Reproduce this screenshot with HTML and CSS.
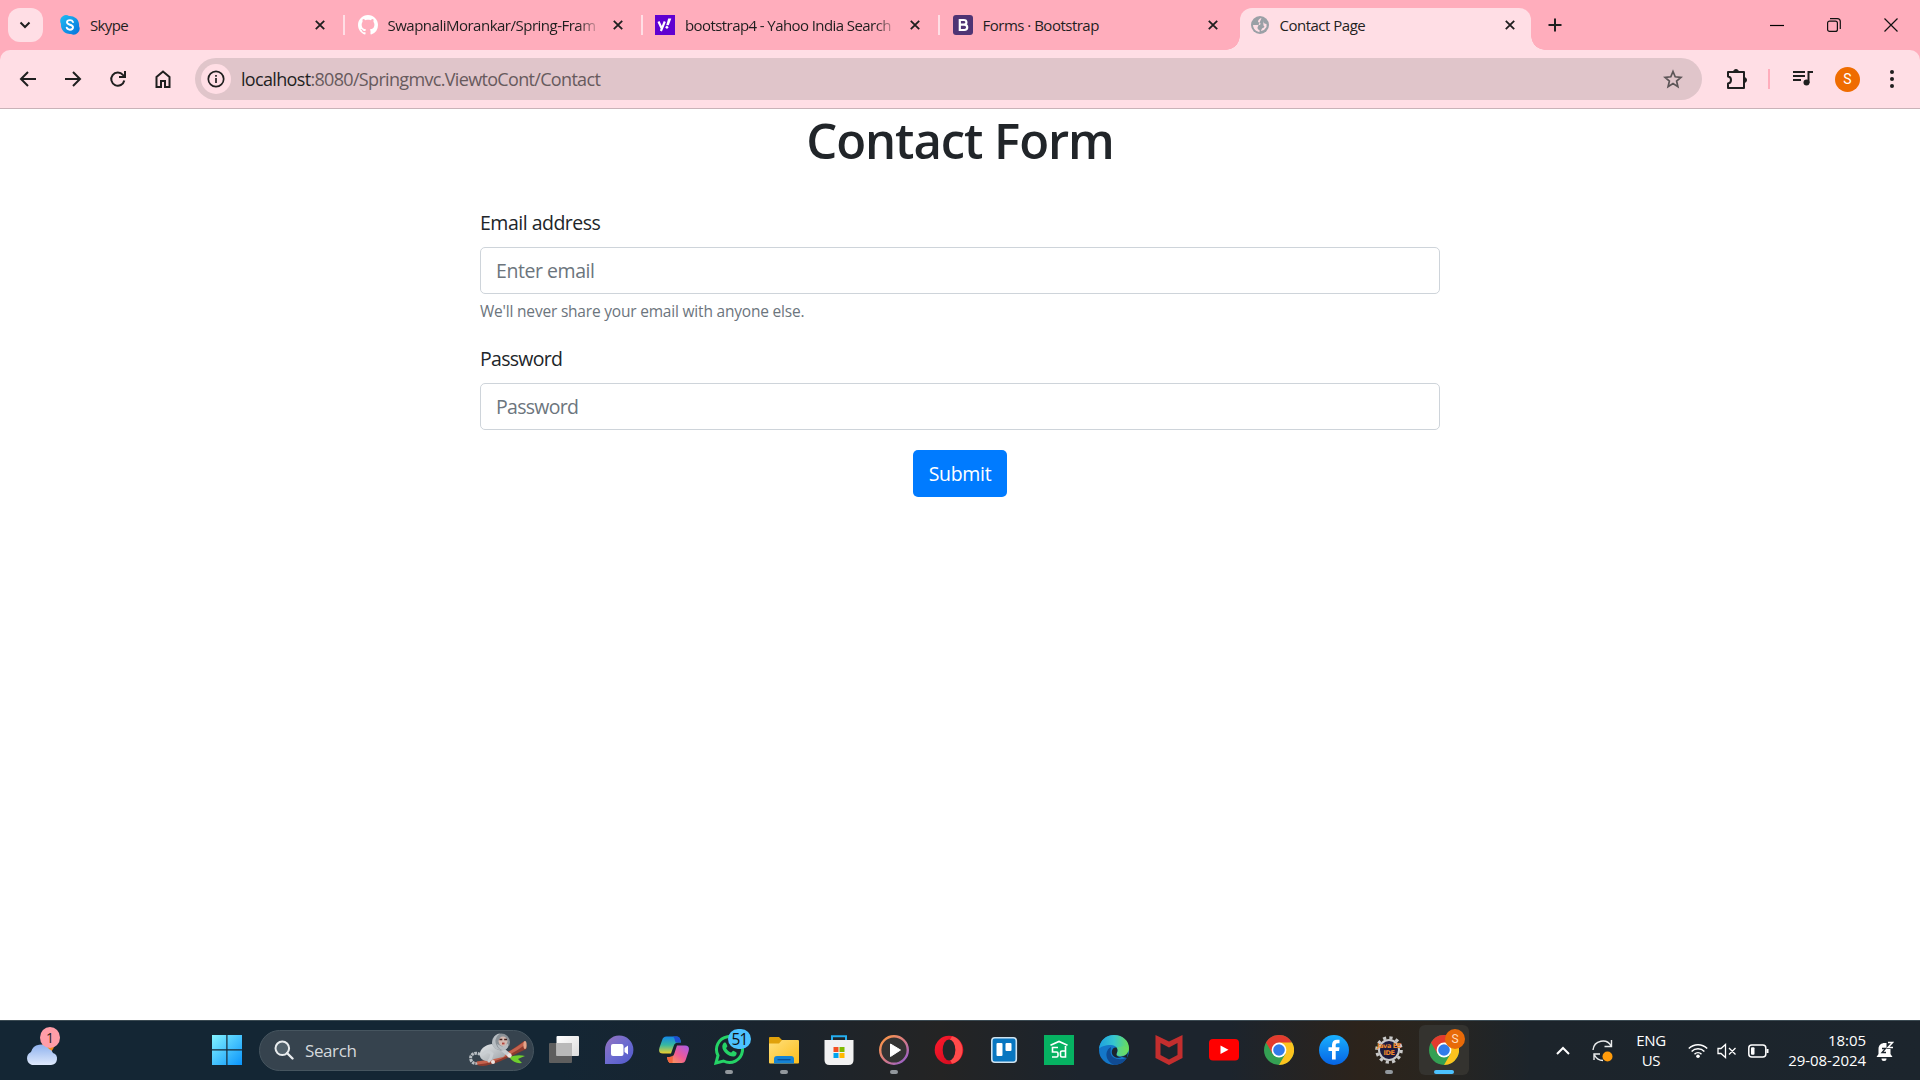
FILE: index.html
```html
<!DOCTYPE html>
<html lang="en">
<head>
<meta charset="utf-8">
<title>Contact Page</title>
<link rel="stylesheet" href="styles.css">
</head>
<body>
<svg class="defs" width="0" height="0">
  <defs>
    <linearGradient id="win" x1="0" y1="0" x2="1" y2="1"><stop offset="0" stop-color="#83f3ff"/><stop offset="1" stop-color="#0a94fb"/></linearGradient>
    <linearGradient id="skype" x1="0" y1="0" x2="1" y2="1"><stop offset="0" stop-color="#1fbdf3"/><stop offset="1" stop-color="#0672dc"/></linearGradient>
    <linearGradient id="cloud" x1="0" y1="0" x2="0" y2="1"><stop offset="0" stop-color="#8fb2ee"/><stop offset="1" stop-color="#dfe9fc"/></linearGradient>
    <linearGradient id="view" x1="0" y1="0" x2="1" y2="1"><stop offset="0" stop-color="#fff"/><stop offset="1" stop-color="#dcdcdc"/></linearGradient>
    <linearGradient id="teams" x1="0" y1="0" x2="1" y2="1"><stop offset="0" stop-color="#9673bd"/><stop offset=".5" stop-color="#6d6bd0"/><stop offset="1" stop-color="#4f58ca"/></linearGradient>
    <linearGradient id="cop1" x1="0" y1="0" x2="0" y2="1"><stop offset="0" stop-color="#1488e8"/><stop offset=".5" stop-color="#37b8a0"/><stop offset="1" stop-color="#f0d02c"/></linearGradient>
    <linearGradient id="cop2" x1="1" y1="0" x2="0" y2="1"><stop offset="0" stop-color="#a65bea"/><stop offset=".5" stop-color="#ee5a97"/><stop offset="1" stop-color="#fdaa48"/></linearGradient>
    <linearGradient id="folder" x1="0" y1="0" x2="1" y2="1"><stop offset="0" stop-color="#ffe07c"/><stop offset="1" stop-color="#fcbd1c"/></linearGradient>
    <linearGradient id="ring" x1="0" y1="0" x2="1" y2="1"><stop offset="0" stop-color="#ff9a3d"/><stop offset=".5" stop-color="#d97b83"/><stop offset="1" stop-color="#8b5bd6"/></linearGradient>
    <linearGradient id="opera" x1="0" y1="0" x2="1" y2="1"><stop offset="0" stop-color="#ff1b2d"/><stop offset="1" stop-color="#c8081c"/></linearGradient>
    <linearGradient id="edge1" x1="0" y1="0" x2="1" y2="0"><stop offset="0" stop-color="#1da1e0"/><stop offset=".5" stop-color="#36c5cf"/><stop offset="1" stop-color="#6bdf55"/></linearGradient>
    <linearGradient id="fb" x1="0" y1="0" x2="0" y2="1"><stop offset="0" stop-color="#19affe"/><stop offset="1" stop-color="#0663e4"/></linearGradient>
    <linearGradient id="fur" x1="0" y1="0" x2="1" y2="1"><stop offset="0" stop-color="#e4e7e9"/><stop offset="1" stop-color="#9aa0a5"/></linearGradient>
    <symbol id="chrome" viewBox="0 0 30 30">
      <circle cx="15" cy="15" r="15" fill="#34a053"/>
      <path d="M2 7.5A15 15 0 0 1 28 7.5L15 9 8.5 18.7z" fill="#e33b2e"/>
      <path d="M28 7.5A15 15 0 0 1 15 30l6.5-11.2L15 7.5z" fill="#fcc31e"/>
      <circle cx="15" cy="15" r="7.4" fill="#fff"/><circle cx="15" cy="15" r="5.8" fill="#327bea"/>
    </symbol>
    <symbol id="x" viewBox="0 0 10 10"><path d="M.8.8l8.4 8.4M9.200.8L.8 9.200" stroke="#1f1f1f" stroke-width="1.8" fill="none"/></symbol>
  </defs>
</svg>

<div class="tabstrip">
  <div class="tab-search"><svg width="12" height="8" viewBox="0 0 12 8"><path d="M1.500 1.500L6 6l4.500-4.500" fill="none" stroke="#1f1f1f" stroke-width="2"/></svg></div>
  <div class="tab first">
    <svg class="fav" viewBox="0 0 20 20"><path d="M6 0a6 6 0 0 1 3 1A9 9 0 0 1 19 11a6 6 0 0 1-8 8A9 9 0 0 1 1 9 6 6 0 0 1 6 0z" fill="url(#skype)"/><path d="M13 7c-.6-1.500-1.700-1.900-3-1.900-1.700 0-3 .8-3 2.200 0 3.200 6 1.700 6 5 0 1.500-1.400 2.400-3.100 2.400-1.600 0-2.800-.7-3.200-2.100" fill="none" stroke="#fff" stroke-width="1.900" stroke-linecap="round"/></svg>
    <span class="title t1">Skype</span><svg class="close"><use href="#x"/></svg>
  </div>
  <div class="tab">
    <svg class="fav" viewBox="0 0 16 16"><path fill="#fff" d="M8 0C3.580 0 0 3.580 0 8c0 3.540 2.290 6.530 5.470 7.590.4.070.55-.17.55-.38 0-.19-.01-.82-.01-1.490-2.010.37-2.530-.49-2.690-.94-.09-.23-.48-.94-.82-1.130-.28-.15-.68-.52-.01-.53.63-.01 1.080.58 1.230.82.72 1.210 1.870.87 2.330.66.07-.52.28-.87.51-1.070-1.780-.2-3.640-.89-3.640-3.950 0-.87.31-1.590.82-2.150-.08-.2-.36-1.020.08-2.120 0 0 .67-.21 2.200.82.64-.18 1.320-.27 2-.27s1.360.09 2 .27c1.530-1.040 2.200-.82 2.200-.82.44 1.100.16 1.920.08 2.120.51.56.82 1.270.82 2.150 0 3.070-1.870 3.750-3.650 3.950.29.25.54.73.54 1.480 0 1.070-.01 1.930-.01 2.200 0 .21.15.46.55.38A8.010 8.010 0 0 0 16 8c0-4.420-3.580-8-8-8z"/></svg>
    <span class="title fade t2">SwapnaliMorankar/Spring-Fram</span><svg class="close"><use href="#x"/></svg>
  </div>
  <div class="tab">
    <svg class="fav" viewBox="0 0 20 20"><rect width="20" height="20" fill="#5f01d1"/><path d="M3.500 6.500l3 6.500M9.800 6.500L5.900 16" stroke="#fff" stroke-width="2.200" fill="none"/><path d="M13.200 3.500h3.100l-2.500 6.800h-2.600z" fill="#fff"/><circle cx="11.900" cy="12.300" r="1.400" fill="#fff"/></svg>
    <span class="title fade t3">bootstrap4 - Yahoo India Search</span><svg class="close"><use href="#x"/></svg>
  </div>
  <div class="tab">
    <svg class="fav" viewBox="0 0 20 20"><rect width="20" height="20" rx="3" fill="#4f3474"/><path d="M6.800 5h4c3.500 0 3.500 4.600 0 4.600H6.800h4.500c3.900 0 3.900 5.400 0 5.400H6.800z" fill="none" stroke="#fff" stroke-width="2.200"/></svg>
    <span class="title t4">Forms · Bootstrap</span><svg class="close"><use href="#x"/></svg>
  </div>
  <div class="tab active">
    <svg class="fav globe" viewBox="0 0 18 18"><circle cx="9" cy="9" r="9" fill="#9aa0a6"/><path d="M10.500 2C8.500 2.500 7 4 7 5.500c0 1.300 2.300.6 2.500 2C9.700 8.900 8 9.300 6.500 9H2c0 2.500 1.500 5 3.500 6l3 1.200V14c-1.300-.3-2-1-2-2.500M12.500 9.500c1.500.8 1 2-.5 2.500-1 .3-1.500 1.200-2 3l3-1 2.500-3V8c-2-.2-3-1-3.200-2.500L12 3z" fill="#ffdee5"/></svg>
    <span class="title t5">Contact Page</span><svg class="close"><use href="#x"/></svg>
  </div>
  <svg class="new-tab" width="14" height="14" viewBox="0 0 14 14"><path d="M7 .5v13M.5 7h13" stroke="#1f1f1f" stroke-width="2"/></svg>
  <div class="window-buttons">
    <svg width="14" height="14" viewBox="0 0 14 14"><path d="M0 7.500h14" stroke="#000" stroke-width="1.200"/></svg>
    <svg width="14" height="14" viewBox="0 0 14 14"><rect x=".6" y="3.100" width="9.800" height="10.300" rx="2" fill="none" stroke="#111" stroke-width="1.200"/><path d="M3 .6h7.300a3 3 0 0 1 3 3V11" fill="none" stroke="#111" stroke-width="1.200"/></svg>
    <svg width="14" height="14" viewBox="0 0 14 14"><path d="M.5.5l13 13M13.500.5l-13 13" stroke="#111" stroke-width="1.200"/></svg>
  </div>
</div>

<div class="toolbar-back">
<div class="toolbar">
  <svg class="nav" viewBox="0 0 20 20"><path d="M18 10H3M10 3l-7 7 7 7" /></svg>
  <svg class="nav" viewBox="0 0 20 20"><path d="M2 10h15M10 3l7 7-7 7"/></svg>
  <svg class="nav" viewBox="0 0 20 20"><path d="M16.300 11.500a6.600 6.600 0 1 1-1.400-5.700l1.800 2M17 2v6h-6"/></svg>
  <svg class="nav" viewBox="0 0 20 20"><path d="M3.500 18V8L10 2.500 16.500 8v10H12v-6H8v6z"/></svg>
  <div class="address">
    <div class="info"><svg width="18" height="18" viewBox="0 0 18 18"><circle cx="9" cy="9" r="7.700" fill="none" stroke="#1f1f1f" stroke-width="1.700"/><path d="M9 8v5M9 5v1.800" stroke="#1f1f1f" stroke-width="1.700"/></svg></div>
    <span class="url"><b>localhost</b>:8080/Springmvc.ViewtoCont/Contact</span>
    <svg class="star" width="20" height="20" viewBox="0 0 20 20"><path d="M10 2.500l2.200 5.300 5.700.5-4.300 3.700 1.300 5.600L10 14.600l-4.900 3 1.300-5.600L2.100 8.300l5.700-.5z" fill="none" stroke="#5c5557" stroke-width="1.700"/></svg>
  </div>
  <svg class="puzzle" width="22" height="22" viewBox="0 0 22 22"><path d="M2 4h16v16H2v-4.500c4-.5 4-6.500 0-7z" fill="none" stroke="#1f1f1f" stroke-width="2" stroke-linejoin="round"/><path d="M7.500 4a2.500 2.500 0 0 1 5 0zM18 9.500a2.500 2.500 0 0 1 0 5z" fill="#1f1f1f" stroke="#1f1f1f"/></svg>
  <i class="divider"></i>
  <svg class="music" width="20" height="18" viewBox="0 0 20 18"><path d="M0 2h12M0 6h12M0 10h8" stroke="#1f1f1f" stroke-width="2"/><path d="M15.500 13V2H20" fill="none" stroke="#1f1f1f" stroke-width="2"/><circle cx="13.500" cy="12.500" r="3" fill="#1f1f1f"/></svg>
  <span class="avatar">S</span>
  <svg class="dots" width="6" height="18" viewBox="0 0 6 18"><circle cx="3" cy="2" r="2"/><circle cx="3" cy="9" r="2"/><circle cx="3" cy="16" r="2"/></svg>
</div>
</div>

<main class="page">
  <h1>Contact Form</h1>
  <form class="form">
    <label for="email">Email address</label>
    <input id="email" type="email" placeholder="Enter email">
    <small>We'll never share your email with anyone else.</small>
    <label for="pass">Password</label>
    <input id="pass" type="password" placeholder="Password">
    <button type="button">Submit</button>
  </form>
</main>

<footer class="taskbar">
  <div class="weather">
    <svg width="34" height="38" viewBox="0 0 34 38"><circle cx="24" cy="18" r="6" fill="#f58a1c"/><path d="M8 37a7 7 0 0 1-1-13 10 10 0 0 1 18-3 6 6 0 0 1 4 4 6.200 6.200 0 0 1-2 12z" fill="url(#cloud)"/></svg>
    <span class="count">1</span>
  </div>
  <svg class="start" width="30" height="30" viewBox="0 0 30 30"><path d="M0 0h14.300v14.300H0zM15.500 0H30v14.300H15.500zM0 15.500h14.300V30H0zM15.500 15.500H30V30H15.500z" fill="url(#win)"/></svg>
  <div class="search">
    <svg width="20" height="20" viewBox="0 0 20 20"><circle cx="8.300" cy="8.300" r="6.800" fill="#52616b" stroke="#e9ecee" stroke-width="2"/><path d="M13 13l5.500 5.500" stroke="#e9ecee" stroke-width="2.400" stroke-linecap="round"/></svg>
    <span>Search</span>
    <svg class="monkey" width="58" height="34" viewBox="0 0 58 34">
      <path d="M5 29c15 0 32-7 50-21l2 1 .5 7C41 23 30 31 14 33q-7 0-9-4z" fill="#8c3b2e"/><path d="M8 30c17-1 32-8 48-20" stroke="#c4624d" stroke-width="3" fill="none"/><ellipse cx="56" cy="12" rx="1.600" ry="4" fill="#e5a489"/>
      <path d="M40 24q9-3 16-1-5 2-7 3l4 4q-8 1-12-5z" fill="#6fce2e"/>
      <path d="M14 23C6 17 0 22 2 27c1 3 4 4 6 3" fill="none" stroke="#b9bfc4" stroke-width="3" stroke-dasharray="2.500 .8"/>
      <path d="M11 23c-1-7 5-11 12-12l12 4c3 3 2 8-1 9l-9 2c-5 4-13 2-14-3z" fill="url(#fur)"/>
      <path d="M14 21q5-5 9 0-1 5-3 7" fill="none" stroke="#c9ced2" stroke-width="3" stroke-linecap="round"/>
      <path d="M34 17l6 5" stroke="#c6cbcf" stroke-width="4" stroke-linecap="round"/>
      <ellipse cx="32" cy="9" rx="9" ry="8.500" fill="#8b9298"/><path d="M24 6q2-5 7-5.500Q26 4 26.500 9T32 17q-8 0-9-7z" fill="#b7bdc2"/><path d="M28 11l5 2.500 6-3q1 4-3 6.500-6 1-8-6z" fill="#b7bdc2"/>
      <ellipse cx="34" cy="8.300" rx="4.400" ry="4.800" fill="#d3b9b1"/><path d="M30.500 6.500h2.800M35.200 6.500H38" stroke="#43211f" stroke-width="1.500"/><path d="M33 10.500h2.500" stroke="#b3453f" stroke-width="1.800"/>
      <circle cx="40.500" cy="22.500" r="2.200" fill="#eee3df"/><circle cx="24" cy="29" r="2" fill="#eee3df"/>
    </svg>
  </div>
  <div class="apps">
    <div class="app"><svg viewBox="0 0 30 30"><rect y="8" width="23" height="20" rx="1" fill="#5e5e5e"/><rect x="7.500" y="1" width="22.500" height="20" rx="1" fill="url(#view)"/><path d="M7.500 8H23v13H7.500z" fill="#b9b9b9"/></svg></div>
    <div class="app"><svg viewBox="0 0 30 30"><path d="M1 29V15a14.200 14.200 0 1 1 14 14z" fill="url(#teams)"/><rect x="7" y="9" width="12.500" height="12" rx="2" fill="#fff"/><path d="M20.500 13l3.500-2.500v9L20.500 17z" fill="#fff"/></svg></div>
    <div class="app"><svg viewBox="0 0 30 30"><path d="M7.500 1.500H18c2.500 0 3.200 2 4 6h-2.500c-3 0-4 1-5 4L12 18.500H4c-4 0-4.500-2.500-3.500-6l2.500-7c1-3 2-4 4.500-4z" fill="url(#cop1)"/><path d="M13.500 1.500H18c2.500 0 3.200 2 4 6h-5.500c-1-3-1-5.500-3-6z" fill="#1f4fd2"/><path d="M22.500 28H12c-2.500 0-3.200-2-4-6h2.500c3 0 4-1 5-4l2.500-7.500h8c4 0 4.500 2.500 3.500 6l-2.500 7.500c-1 3-2 4-4.500 4z" fill="url(#cop2)"/><path d="M13.500 28H12c-2.500 0-3.200-2-4-6 3 0 5 0 6-1.500z" fill="#f3663f"/></svg></div>
    <div class="app running"><svg viewBox="0 0 30 30"><path d="M2 28l2-7.500A13 13 0 1 1 9.500 26z" fill="none" stroke="#25d366" stroke-width="3"/><path d="M9 9c1.500-2.500 3-1.500 3.500 0l.8 2c.3 1-1.200 1.500-1.200 2.300 1 2 2.600 3.300 4.800 4.200.9.300 1.500-2 2.500-1.700l2.800 1.400c1 .5.300 3-1 3.800-3.700 2.200-13-3-12.900-9.500 0-1 .2-1.800.7-2.500z" fill="#25d366"/></svg><span class="badge unread">51</span></div>
    <div class="app running"><svg viewBox="0 0 30 30"><path d="M0 3c0-1 .7-1 1-1h9l3 3h9v8H0z" fill="#e0a10b"/><path d="M0 8.500h10L13 5h16q1 0 1 1v21.500q0 1-1 1H1q-1 0-1-1z" fill="url(#folder)"/><path d="M5 28.500V24q0-3 3-3h14q3 0 3 3v4.500z" fill="#1583d4"/><path d="M8.500 24.700h13" stroke="#0a4f96" stroke-width="1.300"/></svg></div>
    <div class="app"><svg viewBox="0 0 30 30"><path d="M8 6V1.200h14V6" fill="none" stroke="#25aef0" stroke-width="2"/><path d="M.5 5h29v20q0 5-5 5h-19q-5 0-5-5z" fill="#f2f2f2"/><path d="M9.500 12h5v5h-5z" fill="#f25022"/><path d="M15.500 12h5v5h-5z" fill="#7fba00"/><path d="M9.500 18h5v5h-5z" fill="#00a4ef"/><path d="M15.500 18h5v5h-5z" fill="#ffb900"/></svg></div>
    <div class="app running"><svg viewBox="0 0 30 30"><circle cx="15" cy="15" r="13.800" fill="#333" stroke="url(#ring)" stroke-width="2.400"/><path d="M11.500 9l10 6-10 6.500z" fill="#fff" stroke="#fff" stroke-linejoin="round"/></svg></div>
    <div class="app"><svg viewBox="0 0 30 30"><ellipse cx="15" cy="15" rx="14.300" ry="14.300" fill="url(#opera)"/><path d="M18 1.200c14 3 14 24.600 0 27.600l-2-4c7-3 7-17 0-20z" fill="#ff4b4b"/><ellipse cx="15" cy="15" rx="6.300" ry="10.500" fill="#22272a"/></svg></div>
    <div class="app"><svg viewBox="0 0 30 30"><rect x="2.800" y="2.800" width="24.500" height="24.500" rx="3" fill="#0876c0" stroke="#cfe2ef" stroke-width="1.600"/><rect x="7.500" y="8" width="6" height="13" rx="1" fill="#fff"/><rect x="16.500" y="8" width="6" height="8" rx="1" fill="#fff"/></svg></div>
    <div class="app"><svg viewBox="0 0 30 30"><rect width="30" height="30" fill="#06b262"/><path d="M6.500 10.300L15 6.500l8.500 3.800M14 12.500H8.500V17h4q1.500 0 1.500 1.500v2q0 1.500-1.500 1.500H8M21.500 11v11H18q-1.500 0-1.500-1.500v-3q0-1.500 1.500-1.500h3.500" fill="none" stroke="#fff" stroke-width="1.600"/></svg></div>
    <div class="app"><svg viewBox="0 0 30 30"><circle cx="15" cy="15" r="15" fill="#1477c9"/><path d="M0 14C1 5 7 0 15 0c9 0 15 6 15 13 0 5-4 8-8 8-4 0-5-1-4-3 2-4-1-8-6-8-6 0-11 2-12 4z" fill="url(#edge1)"/><path d="M12 12c-6 3-7 13 3 18 5 0 10-2 12.500-7-8 3-16 0-16-6 0-2 .5-4 .5-5z" fill="#104b93"/><path d="M30 14c0 5-4 7.500-8 7.500s-5-1.500-4-3.500c1-2 .7-4-.5-5.500L25 11z" fill="#76e05b" opacity=".4"/><path d="M17.500 12.500c1.500 2 1 4 .3 5.500-1 2 0 4 5 4-4 2-10 0-10-5 0-3 2-5 4.700-4.500zM29 17c-2 4-5 5-8 4.500L28 23z" fill="#1c242d"/></svg></div>
    <div class="app"><svg viewBox="0 0 30 30"><path d="M1.500 0L15 6.500 28.500 0v23L15 30 1.500 23zM6.500 8v12L15 24.500l8.500-4.500V8L15 12.500z" fill="#c32e2e" fill-rule="evenodd"/></svg></div>
    <div class="app"><svg viewBox="0 0 30 30"><rect y="4" width="30" height="21.500" rx="4" fill="#f00"/><path d="M11.500 10.500l8 4.200-8 4.300z" fill="#fff"/></svg></div>
    <div class="app"><svg><use href="#chrome"/></svg></div>
    <div class="app"><svg viewBox="0 0 30 30"><circle cx="15" cy="15" r="15" fill="url(#fb)"/><path d="M13 24.500V16H9.500v-3.800H13V10c0-3.500 2-5.200 5-5.200h2.500V8.300h-1.800c-1.500 0-2 .8-2 2v1.900h3.800L20 16h-3.300v8.500z" fill="#fff"/></svg></div>
    <div class="app running"><svg viewBox="0 0 30 30"><circle cx="15" cy="15" r="12.300" fill="none" stroke="#c9c9c9" stroke-width="3" stroke-dasharray="3.220 3.220"/><circle cx="15" cy="15" r="10" fill="#1c1a3d" stroke="#c9c9c9" stroke-width="2"/></svg><span class="java">Java EE<br>IDE</span></div>
    <div class="app running current"><svg><use href="#chrome"/></svg><span class="badge profile">S</span></div>
  </div>
  <div class="tray">
    <svg class="chev" width="14" height="9" viewBox="0 0 14 9"><path d="M1 8l6-6 6 6" fill="none" stroke="#fff" stroke-width="2"/></svg>
    <svg class="sync" width="22" height="24" viewBox="0 0 22 24"><path d="M1 11C2 1 15-1 19 7M19.500 1v6.500h-7M2 21v-6h6M2.500 16c2 4 5 5.500 8.500 5.500" fill="none" stroke="#e8eaeb" stroke-width="1.400"/><circle cx="15.500" cy="17.500" r="5" fill="#ff9b0b"/></svg>
    <span class="lang">ENG<br>US</span>
    <svg class="wifi" width="20" height="17" viewBox="0 0 20 17"><path d="M.8 6.500a13 13 0 0 1 18.400 0M3.600 9.500a9 9 0 0 1 12.800 0M6.500 12.200a5 5 0 0 1 7 0" fill="none" stroke="#fff" stroke-width="1.500"/><circle cx="10" cy="14.300" r="1.800" fill="#fff"/></svg>
    <svg class="vol" width="20" height="16" viewBox="0 0 20 16"><path d="M1 5.500h3l4.500-4v13l-4.500-4H1zM12 5l6.500 6.500M18.500 5L12 11.500" fill="none" stroke="#fff" stroke-width="1.300"/></svg>
    <svg class="batt" width="21" height="14" viewBox="0 0 21 14"><rect x=".8" y="1" width="17" height="12" rx="3" fill="none" stroke="#fff" stroke-width="1.500"/><rect x="3" y="3.200" width="3.500" height="7.600" rx="1" fill="#fff"/><path d="M19.500 5v4" stroke="#fff" stroke-width="2"/></svg>
    <span class="clock">18:05<br>29-08-2024</span>
    <svg class="bell" width="18" height="20" viewBox="0 0 18 20"><path d="M2.500 13V8C2.500 4 5.500 2 8.500 2h6v11l2 3H.5z" fill="#fff"/><path d="M5.500 17.500h5a2.500 2.500 0 0 1-5 0z" fill="#fff"/><path d="M6 7.500h3.600l-3.600 4h4" fill="none" stroke="#1c252e" stroke-width="1.300"/><path d="M10.500 0H18v8h-7.500z" fill="#1c252d"/><path d="M12 1.500h4.500l-4.500 5h5" fill="none" stroke="#fff" stroke-width="1.500"/></svg>
  </div>
</footer>
</body>
</html>
```
FILE: styles.css
```css
* { box-sizing: border-box; }
body {
  margin: 0;
  width: 1920px;
  height: 1080px;
  overflow: hidden;
  display: flex;
  flex-direction: column;
  background: #fff;
  font-family: "Open Sans", "Noto Sans", sans-serif;
  color: #1f1f1f;
}
.defs { position: absolute; }
svg { display: block; flex: none; }

.tabstrip {
  height: 50px;
  flex: none;
  display: flex;
  align-items: center;
  background: #ffadbc;
}
.tab-search {
  width: 35px;
  height: 34px;
  margin-left: 8px;
  padding-right: 1px;
  border-radius: 12px;
  background: #ffdee5;
  display: grid;
  place-items: center;
}
.tab {
  width: 297.5px;
  height: 20px;
  padding: 0 18px 0 12.500px;
  display: flex;
  align-items: center;
  gap: 10px;
  border-left: 2px solid #ffdee5;
}
.tab.first { width: 300px; padding-left: 15px; border-color: transparent; }
.fav { width: 20px; height: 20px; }
.title {
  flex: 1;
  font-size: 15px;
  line-height: 22px;
  white-space: nowrap;
}
.fade { -webkit-mask-image: linear-gradient(to right, #000 190px, transparent 213px); mask-image: linear-gradient(to right, #000 190px, transparent 213px); }
.t1 { letter-spacing: -.65px; }
.t2 { letter-spacing: -.5px; }
.t3 { letter-spacing: -.58px; }
.t4 { letter-spacing: -.5px; }
.t5 { letter-spacing: -.5px; }
.close { width: 10px; height: 10px; }
.tab.active {
  position: relative;
  align-self: flex-end;
  width: 291px;
  height: 42px;
  margin-left: 4px;
  padding: 0 16px 8px 11px;
  border: 0;
  border-radius: 12px 12px 0 0;
  background: #ffdee5;
}
.tab.active::before, .tab.active::after {
  content: "";
  position: absolute;
  bottom: 0;
  width: 14px;
  height: 14px;
}
.tab.active::before { left: -14px; background: radial-gradient(circle at 0 0, transparent 13.5px, #ffdee5 14px); }
.tab.active::after { right: -14px; background: radial-gradient(circle at 100% 0, transparent 13.5px, #ffdee5 14px); }
.globe { width: 18px; height: 18px; margin-right: 1px; }
.new-tab { margin-left: 17.500px; }
.window-buttons { margin-left: auto; margin-right: 22px; display: flex; gap: 43px; }

.toolbar-back { flex: none; background: #ffadbc; }
.toolbar {
  height: 59px;
  display: flex;
  align-items: center;
  padding: 0 25px 0 17.500px;
  background: #ffdee5;
  border-bottom: 1px solid #c9b2b8;
  border-radius: 10px 10px 0 0;
}
.nav { width: 20px; height: 20px; margin-right: 25px; fill: none; stroke: #1f1f1f; stroke-width: 2; }
.nav:nth-child(4) { margin-right: 22.500px; }
.address {
  width: 1507px;
  height: 42px;
  display: flex;
  align-items: center;
  padding: 0 19px 0 6px;
  border-radius: 21px;
  background: #e0c5ca;
}
.info { width: 30px; height: 30px; border-radius: 50%; background: #ffdee5; display: grid; place-items: center; }
.url { margin-left: 10px; flex: 1; font-size: 18px; letter-spacing: -.67px; color: #675a5d; }
.url b { font-weight: 400; color: #1f1f1f; }
.puzzle { margin-left: 24px; }
.divider { width: 2px; height: 20px; margin-left: 20px; background: #ffadbc; }
.music { margin-left: 23px; }
.avatar {
  width: 25px; height: 25px; margin-left: 22px;
  border-radius: 50%; background: #ef6c00; color: #fff;
  font: 14px/25px Roboto, sans-serif; text-align: center;
}
.dots { margin-left: auto; fill: #1f1f1f; }

.page { flex: 1; color: #212529; }
h1 { margin: 0; padding-top: 1px; font-size: 49px; line-height: 60px; font-weight: 600; letter-spacing: -1.050px; text-align: center; }
.form { width: 960px; margin: 38px auto 0; display: flex; flex-direction: column; }
label { font-size: 19.500px; line-height: 30px; letter-spacing: -.5px; }
label[for="pass"], #pass { letter-spacing: -.7px; }
input {
  height: 47px;
  margin-top: 9px;
  padding: 0 15px;
  border: 1px solid #ced4da;
  border-radius: 5px;
  font: 19.500px "Open Sans", sans-serif;
  letter-spacing: -.45px;
}
input::placeholder { color: #6c757d; opacity: 1; }
small { margin-top: 5px; margin-bottom: 21px; font-size: 15.500px; line-height: 24px; letter-spacing: -.2px; color: #6c757d; }
button {
  width: 94px;
  height: 47px;
  margin: 20px auto 0;
  padding: 0;
  border: 0;
  border-radius: 5px;
  background: #007bff;
  color: #fff;
  font: 19.500px "Open Sans", sans-serif;
  letter-spacing: -.3px;
}

.taskbar {
  height: 60px;
  flex: none;
  display: flex;
  align-items: center;
  padding-bottom: 1px;
  border-top: 1px solid #3b4a52;
  background: linear-gradient(to right, #142634 0, #142634 560px, #1a242e 760px, #242424 940px, #1c242d 1080px, #1c242d 1230px, #2c231b 1360px, #29251f 1430px, #1c242b 1530px, #1c252d);
}
.weather { position: relative; width: 34px; height: 38px; margin-left: 24px; margin-top: -8px; }
.weather svg { margin-top: 1px; }
.count {
  position: absolute; left: 16px; top: 0;
  width: 20px; height: 21px; border-radius: 50%;
  background: #ff9da8; color: #1f1f1f;
  font-size: 14px; line-height: 21px; text-align: center;
}
.start { margin-left: 154px; }
.search {
  width: 275px; height: 41px; margin-left: 17px;
  padding: 0 6px 0 14px;
  display: flex; align-items: center;
  border: 1px solid #46555f; border-radius: 21px;
  background: #36434e; color: #d5d9dc;
  font-size: 17px; letter-spacing: -.4px;
}
.search span { margin-left: 11px; flex: 1; }
.apps { display: flex; margin-left: 5px; gap: 5px; }
.app { position: relative; width: 50px; height: 50px; padding: 10px; border-radius: 6px; }
.app > svg { width: 30px; height: 30px; }
.running::after {
  content: ""; position: absolute; left: 21px; bottom: 1px;
  width: 8px; height: 4px; border-radius: 2px; background: #92989d;
}
.current { background: #34332f; }
.current::after { left: 15px; width: 20px; background: #4cc2ff; }
.badge { position: absolute; text-align: center; }
.unread { left: 24px; top: 4px; width: 23px; height: 20px; border-radius: 10px; background: #4cc2ff; color: #101010; font-size: 15.500px; line-height: 20px; letter-spacing: -.8px; }
.profile { left: 26px; top: 4px; width: 20px; height: 20px; border-radius: 50%; background: #e86a08; color: #ffdcbc; font: 12px/20px Roboto, sans-serif; }
.java { position: absolute; left: 5px; top: 18px; width: 40px; text-align: center; color: #f28a2c; font: bold 6.500px/7px "DejaVu Sans", sans-serif; letter-spacing: -.4px; white-space: nowrap; }
.tray { display: flex; align-items: center; margin-left: 87px; color: #fff; font-size: 15px; line-height: 20px; }
.chev, .sync, .wifi, .vol, .batt, .bell { margin-top: 1px; }
.sync { margin-left: 22px; }
.lang { width: 40px; margin-left: 17px; text-align: center; letter-spacing: -.3px; }
.wifi { margin-left: 17px; }
.vol { margin-left: 9px; }
.batt { margin-left: 11px; }
.lang, .clock { margin-top: -1px; }
.clock { width: 90px; margin-left: 7px; text-align: right; white-space: nowrap; letter-spacing: -.05px; }
.bell { margin-left: 10px; }
```
